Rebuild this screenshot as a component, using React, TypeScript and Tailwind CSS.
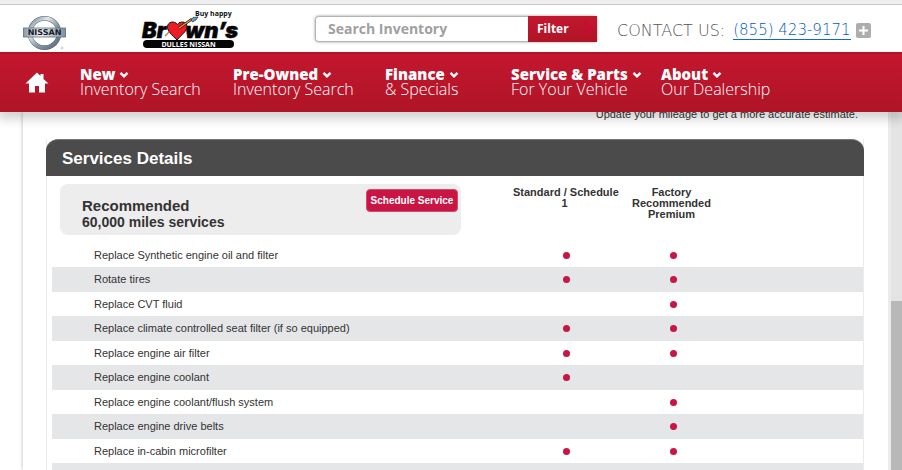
import { useState } from 'react';

interface NavEntry {
  title: string;
  subtitle: string;
  width: string;
}

interface ServiceRow {
  name: string;
  standard: boolean;
  premium: boolean;
}

const navEntries: NavEntry[] = [
  { title: 'New', subtitle: 'Inventory Search', width: 'w-[153px]' },
  { title: 'Pre-Owned', subtitle: 'Inventory Search', width: 'w-[152px]' },
  { title: 'Finance', subtitle: '& Specials', width: 'w-[126px]' },
  { title: 'Service & Parts', subtitle: 'For Your Vehicle', width: 'w-[150px]' },
  { title: 'About', subtitle: 'Our Dealership', width: 'w-[130px]' }
];

const services: ServiceRow[] = [
  { name: 'Replace Synthetic engine oil and filter', standard: true, premium: true },
  { name: 'Rotate tires', standard: true, premium: true },
  { name: 'Replace CVT fluid', standard: false, premium: true },
  { name: 'Replace climate controlled seat filter (if so equipped)', standard: true, premium: true },
  { name: 'Replace engine air filter', standard: true, premium: true },
  { name: 'Replace engine coolant', standard: true, premium: false },
  { name: 'Replace engine coolant/flush system', standard: false, premium: true },
  { name: 'Replace engine drive belts', standard: false, premium: true },
  { name: 'Replace in-cabin microfilter', standard: true, premium: true }
];

function NissanLogo() {
  return (
    <svg className="h-9 w-11" viewBox="0 0 44 36" role="img" aria-label="Nissan">
      <defs>
        <linearGradient id="ring" x1="0" y1="0" x2="1" y2="1">
          <stop offset="0" stopColor="#6f7f8c" />
          <stop offset="0.3" stopColor="#e3e8ec" />
          <stop offset="0.6" stopColor="#8796a3" />
          <stop offset="1" stopColor="#5a6a79" />
        </linearGradient>
        <linearGradient id="bar" x1="0" y1="0" x2="1" y2="0">
          <stop offset="0" stopColor="#8b9aa8" />
          <stop offset="0.4" stopColor="#eef1f3" />
          <stop offset="1" stopColor="#7e8e9d" />
        </linearGradient>
      </defs>
      <circle cx="21.5" cy="18" r="14.6" fill="none" stroke="#596978" strokeWidth="4.6" />
      <circle cx="21.5" cy="18" r="14.6" fill="none" stroke="url(#ring)" strokeWidth="3.6" />
      <rect x="0.5" y="13" width="42" height="9" fill="url(#bar)" stroke="#5f6f7e" strokeWidth="0.8" />
      <text x="21.5" y="20.4" textAnchor="middle" textRendering="geometricPrecision" className="font-['DejaVu_Sans'] text-[8px] font-bold" fill="#16202b">NISSAN</text>
      <circle cx="39" cy="33" r="1" fill="none" stroke="#aaa" strokeWidth="0.6" />
    </svg>
  );
}

function BrownsLogo() {
  return (
    <svg className="h-10 w-[100px]" viewBox="0 0 100 40" role="img" aria-label="Brown's Dulles Nissan">
      <text x="54" y="7" className="font-['Open_Sans'] text-[7px] font-bold" fill="#111">Buy happy</text>
      <g className="font-['Inter'] text-[22px] font-black italic" fill="#050505" stroke="#050505" strokeWidth="0.5">
        <text x="1" y="29">Br</text>
        <text x="44" y="29">wn’s</text>
      </g>
      <path d="M36 31 C31 26 26 22 26.500 17.500 C27 12.500 33.500 11.500 36.500 15.500 C39 11.500 46 12.500 46 17.500 C46 22.500 40 26 36 31Z" fill="#ed1c24" stroke="#111" strokeWidth="1" />
      <path d="M24 27 L28 23" stroke="#c8862d" strokeWidth="1.5" />
      <path d="M38 19 L51 10" stroke="#111" strokeWidth="2.600" />
      <path d="M38 19 L51 10" stroke="#e0a13a" strokeWidth="1.400" />
      <path d="M50 11 L52 8.500 L57 8 L55 11 L51.500 13Z" fill="#5aa4c8" stroke="#111" strokeWidth="0.6" />
      <rect x="2" y="31" width="91" height="8" rx="4" fill="#050505" />
      <text x="47.500" y="37.500" textAnchor="middle" className="font-['Open_Sans'] text-[7px] font-bold" fill="#fff">DULLES NISSAN</text>
    </svg>
  );
}

function Chevron() {
  return (
    <svg className="h-2 w-[10px]" viewBox="0 0 10 8" fill="none">
      <path d="M1.500 1.800 L5 5.300 L8.500 1.800" stroke="#fff" strokeWidth="2.400" />
    </svg>
  );
}

function Dot() {
  return <span role="img" aria-label="Included" className="mx-auto block h-[7px] w-[7px] rounded-full bg-[#c91543]" />;
}

export default function App() {
  const [search, setSearch] = useState('');

  return (
    <div className="flex h-screen flex-col overflow-hidden bg-white font-['Liberation_Sans',sans-serif] text-[#333]">
      <header className="relative z-10 shrink-0 shadow-[0_5px_10px_2px_rgba(0,0,0,0.18)]">
        <div className="h-[5px] border-b border-[#c8c8c8] bg-[#efefef]" />

        {/* Logos, search and phone */}
        <div className="flex h-[47px] items-center bg-white pl-[23px] font-['Open_Sans',sans-serif]">
          <div className="shrink-0 pt-2">
            <NissanLogo />
          </div>
          <div className="ml-[74px] shrink-0">
            <BrownsLogo />
          </div>
          <form className="ml-[74px] flex h-[26px] w-[282px] shrink-0 rounded shadow-[0_0_3px_rgba(0,0,0,0.4)]" onSubmit={(e) => e.preventDefault()}>
            <input
              type="text"
              aria-label="Search Inventory"
              placeholder="Search Inventory"
              value={search}
              onChange={(e) => setSearch(e.target.value)}
              className="min-w-0 flex-1 rounded-l border border-r-0 border-[#b5b5b5] bg-white pl-3 text-[14px] font-bold text-[#555] outline-none placeholder:text-[#a0a0a0]"
            />
            <button type="submit" className="flex w-[69px] items-center justify-between bg-linear-to-b from-[#c3172f] to-[#b01427] pr-1 pl-[9px] text-[12px] font-bold text-white">
              Filter
              <svg className="h-4 w-[10px]" viewBox="0 0 10 16" fill="none">
                <path d="M1.500 1.500 L8 8 L1.500 14.500" stroke="#cc0a35" strokeWidth="2.400" />
              </svg>
            </button>
          </form>
          <div className="ml-5 flex items-center pt-1 whitespace-nowrap font-['DejaVu_Sans',sans-serif] text-[15px] font-extralight text-[#555]">
            <span className="text-[16px]">CONTACT US:</span>
            <a href="tel:8554239171" className="ml-2 border-b border-[#1268c4] leading-[17px] text-[#0058c8]">(855) 423-9171</a>
            <button type="button" aria-label="More numbers" className="ml-[5px] flex h-[15px] w-[15px] items-center justify-center rounded-xs bg-[#adadad]">
              <svg className="h-[11px] w-[11px]" viewBox="0 0 11 11">
                <path d="M5.500 1 V10 M1 5.500 H10" stroke="#fff" strokeWidth="2" />
              </svg>
            </button>
          </div>
        </div>

        {/* Main navigation */}
        <nav className="flex h-[60px] border-t-2 border-[#b01226] bg-linear-to-b from-[#c3172f] to-[#b01427] pl-[25px] font-['Open_Sans',sans-serif] text-white">
          <a href="#home" aria-label="Home" className="mt-[17px] w-[55px]">
            <svg className="h-[22px] w-6" viewBox="0 0 24 22" fill="#fff">
              <path d="M12 1.500 L15.500 5 V3 H18.500 V8 L23.500 12.500 H20 V21.500 H14 V15 H10 V21.500 H4 V12.500 H0.500Z" />
            </svg>
          </a>
          {navEntries.map((entry) => (
            <a key={entry.title} href="#menu" className={`${entry.width} mt-[13px] shrink-0 whitespace-nowrap`}>
              <span className="flex items-center gap-1 text-[15px] leading-[15px] font-extrabold">
                {entry.title}
                <Chevron />
              </span>
              <span className="block text-[16px] leading-[15px] font-light">{entry.subtitle}</span>
            </a>
          ))}
        </nav>
      </header>

      <div className="flex min-h-0 flex-1 pl-[23px]">
        <main className="min-w-0 flex-1 shadow-[-1px_0_3px_rgba(0,0,0,0.18)]">
          <p className="-mt-[6px] pr-[30px] text-right text-[11px] leading-4">Update your mileage to get a more accurate estimate.</p>

          <section className="mt-[17px] mr-6 ml-[23px] border-x border-[#ebebeb]">
            <h2 className="-mx-px flex h-[37px] items-center rounded-t-xl border-t border-[#777] bg-[#4b4b4b] pt-px pl-4 text-[17px] font-bold text-white">Services Details</h2>

            <table className="ml-[5px] w-[calc(100%-5px)] table-fixed border-collapse text-[11px]">
              <colgroup>
                <col className="w-[461px]" />
                <col className="w-[107px]" />
                <col className="w-[107px]" />
                <col />
              </colgroup>
              <thead>
                <tr className="h-[67px] align-top">
                  <th className="pt-2 pl-2 text-left">
                    <div className="flex h-[51px] w-[401px] items-start justify-between rounded-lg bg-[#ededed] pr-[3px] pl-[22px]">
                      <h3 className="mt-[14px] text-[15px] leading-4 font-bold">
                        Recommended
                        <span className="block text-[14px] leading-4">60,000 miles services</span>
                      </h3>
                      <button type="button" className="mt-[5px] h-[23px] w-[92px] rounded border border-[#d6496c] bg-[#c91543] text-[10px] font-bold whitespace-nowrap text-white">Schedule Service</button>
                    </div>
                  </th>
                  <th className="pt-[11px] pr-1 leading-[11px] font-bold">
                    <span className="whitespace-nowrap">Standard / Schedule</span>
                    <br />1
                  </th>
                  <th className="pt-[11px] pr-4 pl-3 leading-[11px] font-bold">Factory Recommended Premium</th>
                  <td />
                </tr>
              </thead>
              <tbody>
                {services.map((service) => (
                  <tr key={service.name} className="h-6 even:h-[25px] even:bg-[#e5e6e8]">
                    <td className="pl-[42px]">{service.name}</td>
                    <td>{service.standard && <Dot />}</td>
                    <td>{service.premium && <Dot />}</td>
                    <td />
                  </tr>
                ))}
                <tr className="h-[25px] bg-[#e5e6e8]">
                  <td colSpan={4} />
                </tr>
              </tbody>
            </table>
          </section>
        </main>

        {/* Scroll track */}
        <div className="w-[14px] shrink-0 border-l-[3px] border-[#ebebeb] bg-[#e4e4e4] pt-[189px]">
          <div className="h-full bg-[#b8b8b8]" />
        </div>
      </div>
    </div>
  );
}
